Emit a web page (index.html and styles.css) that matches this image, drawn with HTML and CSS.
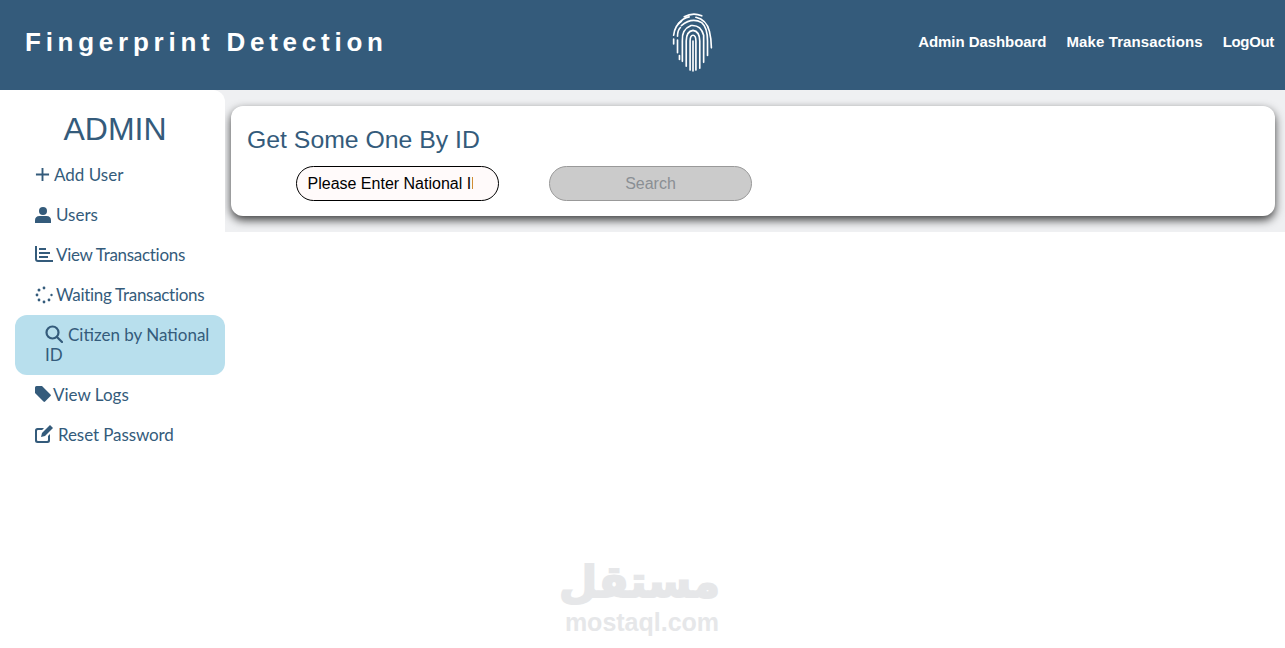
FILE: index.html
```html
<!DOCTYPE html>
<html lang="en">
<head>
  <meta charset="UTF-8">
  <meta name="viewport" content="width=device-width, initial-scale=1.0">
  <title>Fingerprint Detection</title>
  <link rel="stylesheet" href="styles.css">
</head>
<body>
  <header class="topbar">
    <h1 class="brand">Fingerprint Detection</h1>
    <svg class="logo" viewBox="0 0 44 62" fill="none" stroke="#fff" stroke-width="1.7" stroke-linecap="round">
      <path d="M13 5 Q22 0 31 4"/>
      <path d="M7 12 Q12 6 18 5"/>
      <path d="M25 5.500 Q36 8 39 20 Q41 28 41 37"/>
      <path d="M2 24 Q3 14 10 9.500"/>
      <path d="M10 14 Q21 5 31 11 Q37 16 37 30 V45"/>
      <path d="M6 25 Q6 19 9 16"/>
      <path d="M2 28 V33"/>
      <path d="M6 29 V42 M8 45 V49"/>
      <path d="M11 51 V30 Q10 18 20 14 Q30 13 33 24 V52"/>
      <path d="M15 56 V30 Q15 20 22 19 Q29 20 29 30 V58"/>
      <path d="M19 60 V30 Q19 24 22 24 Q25 24 25 30 V60"/>
      <path d="M22 30 V61"/>
    </svg>
    <nav class="topnav">
      <a class="nav-admin" href="#">Admin Dashboard</a>
      <a class="nav-make" href="#">Make Transactions</a>
      <a class="nav-out" href="#">LogOut</a>
    </nav>
  </header>

  <div class="layout">
    <aside class="sidebar">
      <h2 class="sidebar-title">ADMIN</h2>
      <a class="side-link" href="#">
        <svg class="ico" viewBox="0 0 16 16"><path d="M7 1h2v6h6v2H9v6H7V9H1V7h6z"/></svg><span class="gap-a">Add User</span>
      </a>
      <a class="side-link" href="#">
        <svg class="ico ico-user" viewBox="0 0 16 16"><circle cx="8" cy="4" r="4"/><path d="M0 16v-2.500Q0 9 4.500 9h7q4.500 0 4.500 4.500V16z"/></svg><span class="gap-b">Users</span>
      </a>
      <a class="side-link" href="#">
        <svg class="ico ico-chart" viewBox="0 0 18 16"><path d="M0 0h2v13q0 1 1 1h15v2H3q-3 0-3-3z"/><path d="M4 2h7v2H4zM4 6h11v2H4zM4 10h9v2H4z"/></svg><span class="gap-c">View Transactions</span>
      </a>
      <a class="side-link" href="#">
        <svg class="ico ico-spin" viewBox="0 0 18 18"><circle cx="9" cy="2" r="1.400"/><circle cx="4" cy="4" r="1.500"/><circle cx="2" cy="9" r="1.400"/><circle cx="4" cy="14" r="1.400"/><circle cx="9" cy="16" r="1.400"/><circle cx="14" cy="14" r="1.400"/><circle cx="16.500" cy="9" r="1.200"/></svg><span class="gap-c">Waiting Transactions</span>
      </a>
      <a class="side-link active" href="#">
        <svg class="ico ico-search" viewBox="0 0 18 18" fill="none" stroke="#345b7b" stroke-width="2.200"><circle cx="7.500" cy="7.500" r="6"/><path d="M12 12l5 5" stroke-linecap="round"/></svg><span class="gap-d">Citizen by National ID</span>
      </a>
      <a class="side-link" href="#">
        <svg class="ico ico-tag" viewBox="0 0 16 16"><path d="M0 1.500Q0 0 1.500 0H7l8.500 8.500q.8.800 0 1.600l-5.400 5.400q-.8.800-1.600 0L0 7z"/></svg><span class="gap-e">View Logs</span>
      </a>
      <a class="side-link" href="#">
        <svg class="ico ico-edit" viewBox="0 0 18 18"><path d="M15 0l3 3-8 8-4 1 1-4z"/><path d="M2.500 3H9L7.200 5H3q-1 0-1 1v9q0 1 1 1h9q1 0 1-1v-4l2-2v6.500Q15 18 12.500 18h-10Q0 18 0 15.500v-10Q0 3 2.500 3z"/></svg><span class="gap-f">Reset Password</span>
      </a>
    </aside>

    <main class="content">
      <section class="card">
        <h3 class="card-title">Get Some One By ID</h3>
        <form class="search-form">
          <input class="id-input" type="text" placeholder="Please Enter National ID">
          <button class="search-btn" type="button" disabled>Search</button>
        </form>
      </section>
    </main>
  </div>

  <div class="watermark">
    <div class="wm-ar" lang="ar" dir="rtl">مستقل</div>
    <div class="wm-en">mostaql.com</div>
  </div>
</body>
</html>
```

FILE: styles.css
```css
body {
  margin: 0;
  background-color: #fff;
  font-family: "Liberation Sans", Arial, sans-serif;
  color: #345b7b;
  height: 648px;
  overflow: hidden;
}
.topbar {
  height: 90px;
  box-sizing: border-box;
  background-color: #345b7b;
  display: grid;
  grid-template-columns: 646px 44px 1fr;
  align-items: center;
  padding: 0 11px 8px 25px;
}
.brand {
  margin: 2px 0 0;
  color: #fff;
  font-size: 26px;
  font-weight: bold;
  letter-spacing: 4.750px;
  white-space: nowrap;
}
.logo {
  width: 44px;
  height: 60px;
  margin-top: 2px;
}
.topnav {
  display: flex;
  justify-content: flex-end;
  gap: 20px;
}
.topnav a {
  color: #fff;
  font-size: 15px;
  font-weight: bold;
  text-decoration: none;
  white-space: nowrap;
}
.topnav .nav-admin { letter-spacing: -0.070px; }
.topnav .nav-make { letter-spacing: 0.120px; }
.topnav .nav-out { letter-spacing: -0.330px; }
.layout {
  display: flex;
  align-items: flex-start;
}
.sidebar {
  position: relative;
  z-index: 1;
  flex: 0 0 225px;
  width: 225px;
  box-sizing: border-box;
  padding-left: 15px;
  background-color: #fff;
  border-top-right-radius: 12px;
}
.sidebar-title {
  margin: 0;
  height: 65px;
  line-height: 78px;
  padding-right: 10px;
  text-align: center;
  font-size: 32px;
  font-weight: normal;
}
.side-link {
  display: block;
  padding: 10px 20px;
  font-family: Lato, "Open Sans", sans-serif;
  font-size: 17px;
  line-height: 20px;
  color: #345b7b;
  text-decoration: none;
}
.side-link.active {
  padding-left: 30px;
  padding-right: 10px;
  background-color: #b8dfed;
  border-radius: 12px;
}
.ico {
  display: inline-block;
  width: 15px;
  height: 15px;
  margin: -3px 0;
  fill: #345b7b;
  vertical-align: 2px;
}
.ico-user { width: 16px; height: 16px; vertical-align: 1px; }
.ico-chart { width: 18px; height: 16px; vertical-align: 2px; }
.ico-spin { width: 18px; height: 18px; vertical-align: 0; }
.ico-search { width: 18px; height: 18px; fill: none; vertical-align: 1px; }
.ico-tag { width: 16px; height: 16px; vertical-align: 2px; }
.ico-edit { width: 18px; height: 18px; vertical-align: 1px; }
.gap-a { margin-left: 4px; }
.gap-b { margin-left: 5px; }
.gap-c { margin-left: 3px; letter-spacing: -0.300px; }
.gap-d { margin-left: 5px; }
.gap-e { margin-left: 2px; }
.gap-f { margin-left: 5px; letter-spacing: -0.100px; }
.content {
  flex: 1;
  height: 142px;
  box-sizing: border-box;
  margin-left: -12px;
  padding: 16px 10px 0 18px;
  background-color: #eff0f2;
  overflow: hidden;
}
.card {
  height: 110px;
  box-sizing: border-box;
  padding: 20px 16px 0;
  background-color: #fff;
  border-radius: 12px;
  box-shadow: 0 4px 10px rgba(0, 0, 0, 0.75);
}
.card-title {
  margin: 0 0 12px;
  font-size: 24.800px;
  font-weight: normal;
  line-height: 28px;
}
.search-form {
  display: flex;
  gap: 50px;
  margin-left: 49px;
}
.id-input {
  width: 203px;
  height: 35px;
  box-sizing: border-box;
  padding: 0 25px 0 10.500px;
  border: 1px solid #000;
  border-radius: 18px;
  background-color: #fffafa;
  font-family: "Liberation Sans", Arial, sans-serif;
  font-size: 16px;
  outline: none;
}
.id-input::placeholder {
  color: #000;
  opacity: 1;
}
.search-btn {
  width: 203px;
  height: 35px;
  border: 1px solid #999;
  border-radius: 18px;
  background-color: #cbcbcb;
  color: #8a8f94;
  font-family: "Liberation Sans", Arial, sans-serif;
  font-size: 16px;
}
.watermark {
  position: absolute;
  left: 564px;
  top: 552px;
  width: 156px;
  text-align: center;
  color: #e6e7e9;
  font-weight: bold;
}
.wm-ar {
  font-family: "DejaVu Sans", sans-serif;
  font-size: 44px;
  line-height: 60px;
  -webkit-text-stroke: 2px #e6e7e9;
}
.wm-en {
  font-family: "Liberation Sans", Arial, sans-serif;
  font-size: 25px;
  line-height: 20px;
}
```
